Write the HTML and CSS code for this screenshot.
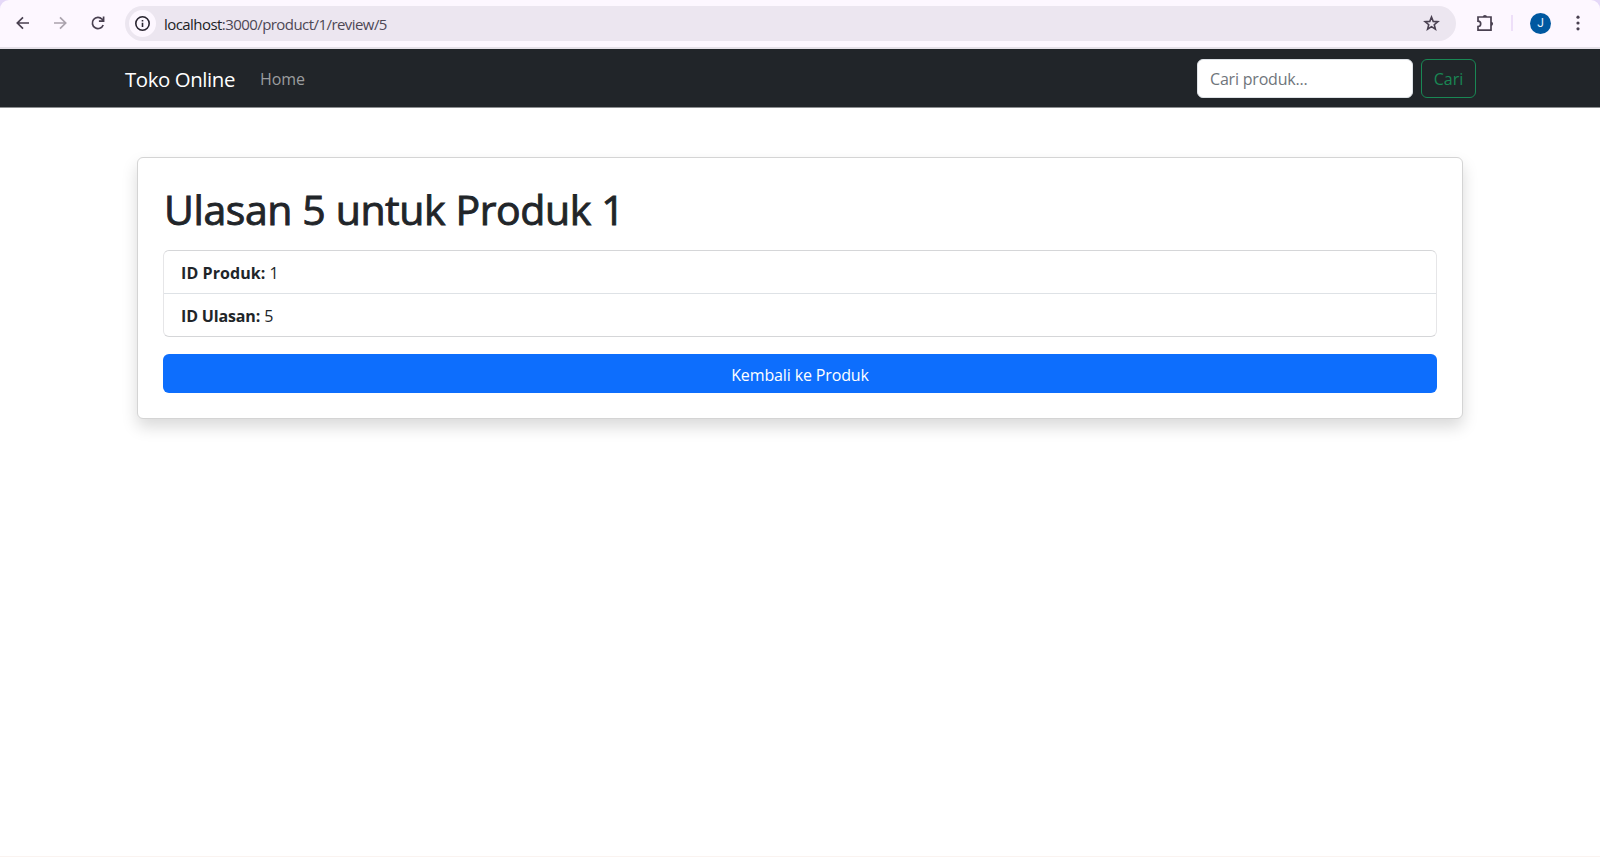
FILE: index.html
```html
<!DOCTYPE html>
<html lang="id">
<head>
<meta charset="utf-8">
<title>Toko Online</title>
<link rel="stylesheet" href="styles.css">
</head>
<body>
<div class="frame">
<header class="toolbar">
  <svg class="icon back" viewBox="0 0 16 16"><path d="M14 8H2.5M8 2.3 2.3 8 8 13.7"/></svg>
  <svg class="icon forward" viewBox="0 0 16 16"><path d="M2 8h11.5M8 2.3 13.7 8 8 13.7"/></svg>
  <svg class="icon reload" viewBox="0 0 16 16"><path d="M13.2 10A5.6 5.6 0 1 1 12.1 4.2L13.6 5.8M13.6 1.5v4.7H8.9"/></svg>
  <div class="address">
    <span class="info"><svg class="icon info-icon" viewBox="0 0 16 16"><circle cx="8" cy="8" r="6.3"/><path d="M8 7.2v4M8 4.6v1.5"/></svg></span>
    <span class="url"><span class="host">localhost</span>:3000/product/1/review/5</span>
    <svg class="icon star" viewBox="0 0 16 16"><path d="M8 1.9 9.6 6l4.4.3-3.4 2.8 1.1 4.3L8 11l-3.7 2.4 1.1-4.3L2 6.3 6.4 6z"/></svg>
  </div>
  <svg class="icon puzzle" viewBox="0 0 18 18"><path d="M2 3h13v13.2H2v-3.7a2.7 2.7 0 0 0 0-5.4z"/><path class="solid" d="M6.8 3a2.1 2.1 0 0 1 4.2 0zM15 7.7a2.1 2.1 0 0 1 0 4.2z"/></svg>
  <span class="divider"></span>
  <span class="avatar">J</span>
  <svg class="dots" viewBox="0 0 4 16"><circle cx="2" cy="2.2" r="1.6"/><circle cx="2" cy="8" r="1.6"/><circle cx="2" cy="13.8" r="1.6"/></svg>
</header>
<nav class="navbar">
  <a class="brand">Toko Online</a>
  <a class="nav-link">Home</a>
  <form class="search">
    <input class="search-input" type="text" placeholder="Cari produk...">
    <button class="search-button" type="button">Cari</button>
  </form>
</nav>
<main class="page">
  <section class="card">
    <h1 class="title">Ulasan 5 untuk Produk 1</h1>
    <ul class="list">
      <li class="row"><strong class="label label-product">ID Produk:</strong> 1</li>
      <li class="row"><strong class="label label-review">ID Ulasan:</strong> 5</li>
    </ul>
    <a class="primary-button"><span>Kembali ke Produk</span></a>
  </section>
</main>
</div>
</body>
</html>
```
FILE: styles.css
```css
* { box-sizing: border-box; }
body { margin: 0; background: #fff; color: #212529; font-family: "Open Sans", "Noto Sans", sans-serif; font-size: 16px; overflow: hidden; }
.frame { height: 857px; display: flex; flex-direction: column; border-bottom: 1px solid #faf3f0; background: linear-gradient(#e5d8f8 0 20px, #fff 20px); }
.toolbar { height: 49px; flex: none; display: flex; align-items: center; padding: 0 13px 1px 15px; background: #fdf7ff; border-bottom: 2px solid #e5e0e8; border-radius: 9px 9px 0 0; }
.icon { width: 16px; height: 16px; flex: none; fill: none; stroke: #494050; stroke-width: 1.7; }
.forward { margin-left: 21px; stroke: #aaa3ad; }
.reload { margin-left: 22px; }
.address { width: 1331px; height: 35px; margin-left: 19px; display: flex; align-items: center; background: #ece6f0; border-radius: 18px; padding: 0 16px 0 4px; }
.info { width: 27px; height: 27px; display: flex; align-items: center; justify-content: center; border-radius: 50%; background: #fdf7ff; }
.info-icon { width: 17px; height: 17px; stroke: #292530; stroke-width: 1.5; }
.url { margin: 1px auto 0 8px; font-size: 15px; letter-spacing: -.56px; color: #4e4855; white-space: nowrap; }
.host { color: #211e25; }
.star { width: 17px; height: 17px; stroke-width: 1.5; }
.puzzle { width: 18px; height: 18px; margin-left: 20px; }
.puzzle .solid { fill: #494050; stroke: none; }
.divider { width: 2px; height: 16px; margin-left: 17px; background: #eedff9; }
.avatar { width: 21px; height: 21px; margin-left: 17px; border-radius: 50%; background: #0058a0; color: #e6f0fa; display: flex; align-items: center; justify-content: center; font-family: Roboto, sans-serif; font-size: 12px; }
.dots { width: 4px; height: 16px; margin-left: auto; margin-right: 7px; fill: #494050; }
.navbar { height: 59px; flex: none; display: flex; align-items: center; padding: 0 124px 0 125px; background: #212529; border-bottom: 1px solid #8d8f91; }
.brand { padding-top: 2px; color: #fff; font-size: 20.4px; line-height: 30px; letter-spacing: -.4px; }
.nav-link { padding-top: 2px; margin-left: 25px; color: #9b9d9f; letter-spacing: -.1px; }
.search { display: flex; gap: 8px; margin-left: auto; }
.search-input { width: 216px; height: 39px; border: 1px solid #dee2e6; border-radius: 6px; padding: 2px 12px 0; font: inherit; letter-spacing: -.2px; }
.search-input::placeholder { color: #6f757b; opacity: 1; }
.search-button { width: 55px; height: 39px; padding: 2px 0 0; border: 1px solid #198754; border-radius: 6px; background: transparent; color: #198754; font: inherit; }
.page { padding: 49px 137px 0; }
.card { height: 262px; padding: 25px; border: 1px solid #d4d4d4; border-radius: 6px; background: #fff; box-shadow: 0 8px 16px rgba(0,0,0,.15); }
.title { margin: 2px 0 17px 1px; font-size: 41px; line-height: 48px; font-weight: 500; letter-spacing: -.4px; white-space: nowrap; -webkit-text-stroke: .9px currentColor; }
.list { height: 87px; margin: 0 0 17px; padding: 0; list-style: none; border: 1px solid #e6e6e8; border-top-color: #d5d6d8; border-bottom-color: #d5d6d8; border-radius: 6px; }
.row { height: 42px; padding: 1px 17px 0; line-height: 42px; }
.row + .row { height: 43px; border-top: 1px solid #dee2e6; }
.label { font-weight: 700; }
.label-product { letter-spacing: .08px; }
.label-review { letter-spacing: -.15px; }
.primary-button { height: 39px; display: flex; align-items: center; justify-content: center; border-radius: 6px; background: #0d6efd; color: #fff; padding-top: 2px; letter-spacing: -.13px; }
```
